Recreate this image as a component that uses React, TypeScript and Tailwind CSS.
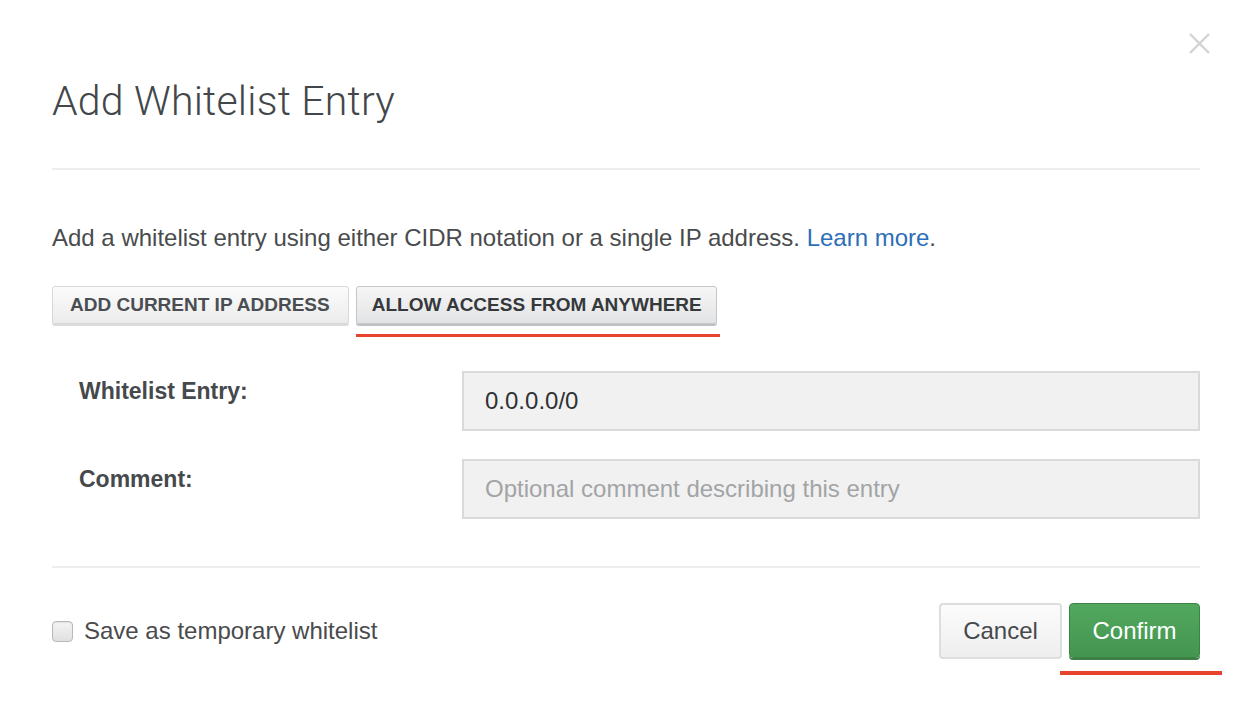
import React from "react";

export default function App() {
  return (
    <div
      className="relative w-[1250px] h-[712px] bg-white overflow-hidden text-[#494b4d]"
      style={{ fontFamily: '"Liberation Sans", Arial, sans-serif' }}
    >
      {/* close */}
      <button className="absolute left-[1188px] top-[32px] w-[23px] h-[23px]" aria-label="close">
        <svg viewBox="0 0 23 23" width="23" height="23">
          <path d="M2 2 L21 21 M21 2 L2 21" stroke="#d3d3d3" strokeWidth="2.4" />
        </svg>
      </button>

      <div className="pl-[52px] pr-[50px] pt-[76px]">
        <h1
          className="text-[41px] leading-[50px] font-light text-[#43474a] tracking-[0.2px]"
          style={{ fontFamily: 'Roboto, "Open Sans", sans-serif' }}
        >
          Add Whitelist Entry
        </h1>
        <div className="mt-[42px] h-[2px] bg-[#ededed]" />

        <p className="mt-[54px] text-[24px] leading-[28px] text-[#494b4d]">
          Add a whitelist entry using either CIDR notation or a single IP address.{" "}
          <a className="text-[#2d6eb9]">Learn more</a>.
        </p>

        <div className="mt-[34px] flex gap-[7px]">
          <button className="h-[38px] pl-[17px] pr-[18px] rounded-[3px] border border-[#d6d8d9] bg-gradient-to-b from-[#fbfbfb] to-[#ececec] shadow-[0_2px_0_#d9dbdc] text-[19px] font-bold uppercase text-[#4a4e52]">
            Add Current IP Address
          </button>
          <button className="h-[38px] pl-[15px] pr-[14px] rounded-[3px] border border-[#c4c6c7] bg-gradient-to-b from-[#f6f6f6] to-[#e3e4e5] shadow-[0_2px_0_#bfc1c2] text-[19px] font-bold uppercase text-[#35393c]">
            Allow Access From Anywhere
          </button>
        </div>

        <div className="mt-[47px] grid grid-cols-[410px_1fr] gap-y-[28px]">
          <label className="pl-[27px] pt-[7px] text-[23px] leading-[26px] font-bold text-[#45494c]">Whitelist Entry:</label>
          <div className="h-[60px] border-2 border-[#dadada] bg-[#f1f1f1] flex items-center px-[21px] text-[24px] text-[#2f3234]">
            0.0.0.0/0
          </div>
          <label className="pl-[27px] pt-[7px] text-[23px] leading-[26px] font-bold text-[#45494c]">Comment:</label>
          <div className="h-[60px] border-2 border-[#dadada] bg-[#f1f1f1] flex items-center px-[21px] text-[24px] text-[#a2a4a6]">
            Optional comment describing this entry
          </div>
        </div>

        <div className="mt-[47px] h-[2px] bg-[#ededed]" />

        <div className="mt-[35px] flex items-center justify-between">
          <label className="flex items-center gap-[11px] text-[24px] text-[#494b4d]">
            <span className="w-[21px] h-[21px] rounded-[4px] border border-[#b9b9b9] bg-gradient-to-b from-[#f4f4f4] to-[#e0e0e0] shadow-[inset_0_1px_1px_rgba(0,0,0,0.08)]" />
            Save as temporary whitelist
          </label>
          <div className="flex gap-[7px]">
            <button className="h-[56px] w-[123px] rounded-[4px] border-2 border-[#dcdedf] bg-gradient-to-b from-[#fcfcfc] to-[#eeeeee] text-[24px] text-[#45494c]">
              Cancel
            </button>
            <button className="h-[55px] w-[131px] rounded-[4px] border border-[#3b8446] bg-gradient-to-b from-[#52a85f] to-[#44954f] shadow-[0_2px_0_#3e7f47] text-[24px] text-white">
              Confirm
            </button>
          </div>
        </div>
      </div>

      {/* annotation underlines */}
      <div className="absolute left-[356px] top-[334px] w-[364px] h-[3px] bg-[#e8432d]" />
      <div className="absolute left-[1060px] top-[671px] w-[162px] h-[4px] bg-[#e8432d]" />
    </div>
  );
}
